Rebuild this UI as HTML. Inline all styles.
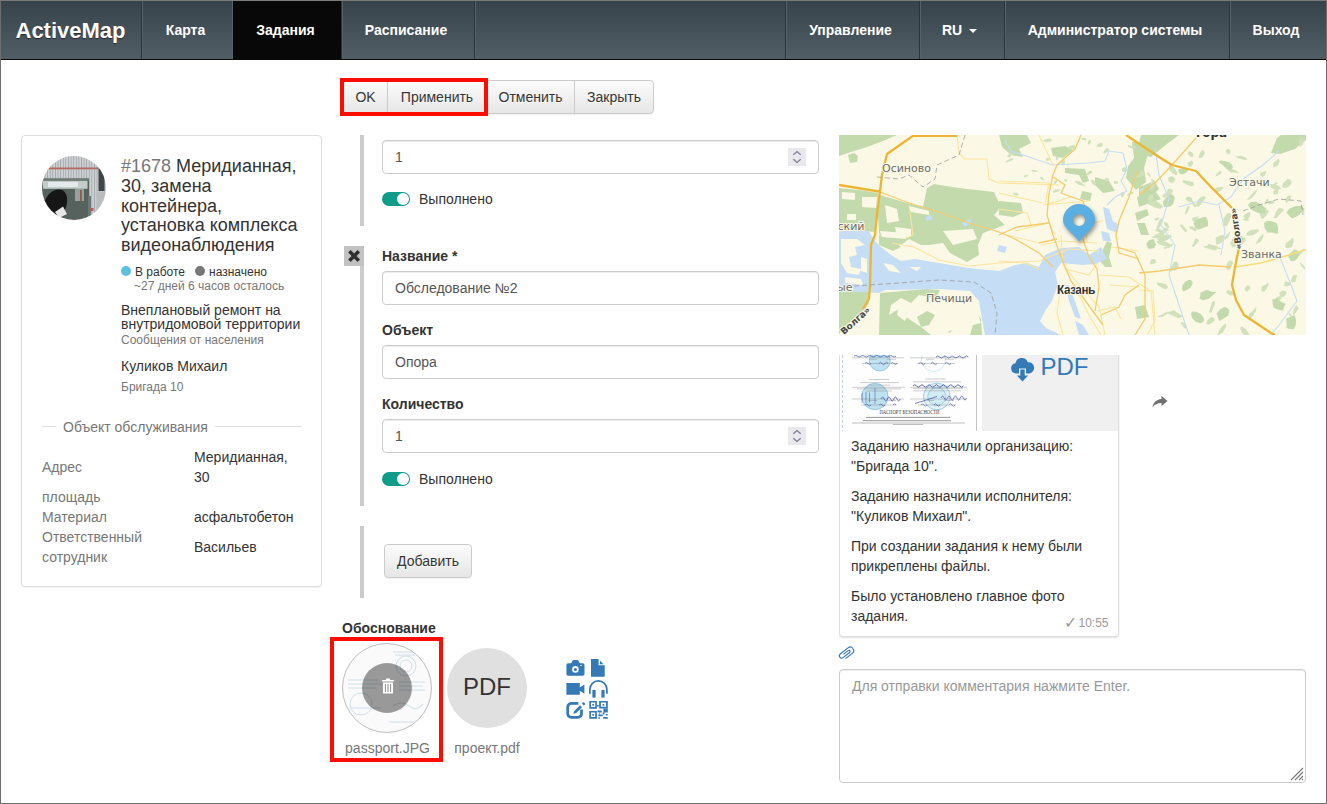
<!DOCTYPE html>
<html lang="ru">
<head>
<meta charset="utf-8">
<title>ActiveMap</title>
<style>
*{box-sizing:border-box;}
html,body{margin:0;padding:0;}
body{width:1327px;height:804px;overflow:hidden;background:#fff;font-family:"Liberation Sans",Arial,sans-serif;font-size:14px;line-height:20px;color:#333;position:relative;}
.abs{position:absolute;}
#frame{position:absolute;left:0;top:0;width:1327px;height:804px;border:1px solid #6e6e6e;border-top-color:#7c7a78;pointer-events:none;z-index:100;}
/* NAV */
#nav{position:absolute;left:1px;top:1px;width:1325px;height:59px;background:linear-gradient(#37434b,#525e66);border-bottom:1px solid #0a0a0a;}
#brand{position:absolute;left:14.5px;top:0;height:58px;line-height:59px;font-size:22px;font-weight:bold;color:#fff;text-shadow:0 1px 1px rgba(0,0,0,.5);}
.ni{position:absolute;top:0;height:58px;padding-right:4px;line-height:58px;text-align:center;color:#fff;font-weight:bold;font-size:14px;border-left:1px solid #2b343a;box-shadow:inset 1px 0 0 #566168;}
.ni.act{background:#080808;box-shadow:-1px 0 0 #566168;border-left-color:#080808;}
.caret{display:inline-block;width:0;height:0;border-left:4px solid transparent;border-right:4px solid transparent;border-top:4px solid #fff;vertical-align:middle;margin-left:3px;}
/* buttons */
.btn{position:absolute;height:34px;line-height:20px;padding:6px 0;text-align:center;font-size:14px;color:#333;border:1px solid #ccc;background:linear-gradient(#fcfcfc,#e6e6e6);text-shadow:0 1px 0 #fff;box-shadow:0 1px 1px rgba(0,0,0,.06);}
.red{position:absolute;border:4px solid #ff0c00;z-index:5;}
/* card */
#card{position:absolute;left:21px;top:135px;width:301px;height:452px;border:1px solid #ddd;border-radius:4px;box-shadow:0 1px 1px rgba(0,0,0,.05);background:#fff;}
.inp{position:absolute;left:382px;width:437px;height:34px;border:1px solid #ccc;border-radius:4px;box-shadow:inset 0 1px 1px rgba(0,0,0,.075);padding:6px 12px;font-size:14px;line-height:20px;color:#555;background:#fff;}
.lbl{position:absolute;left:382px;font-weight:bold;font-size:14px;line-height:20px;color:#333;}
.bar{position:absolute;left:360px;width:4px;background:#ccc;}
.tog{position:absolute;left:382px;width:28px;height:14px;border-radius:7px;background:#0f9d8a;}
.tog i{position:absolute;right:1px;top:1px;width:12px;height:12px;border-radius:6px;background:#fff;}
.togl{position:absolute;left:419px;font-size:14px;line-height:20px;color:#333;}
.spin{position:absolute;right:12px;top:7px;width:18px;height:18px;background:#e9e9ed;}

.dot{width:10px;height:10px;border-radius:5px;}
.s12{font-size:12px;line-height:16px;white-space:nowrap;}
.g14{font-size:14px;line-height:20px;color:#777;}
.v14{font-size:14px;line-height:20px;color:#333;}
</style>
</head>
<body>
<div id="nav">
  <div id="brand">ActiveMap</div>
  <div class="ni" style="left:140px;width:92px;">Карта</div>
  <div class="ni act" style="left:232px;width:108px;">Задания</div>
  <div class="ni" style="left:340px;width:134px;border-right:1px solid #2b343a;box-shadow:inset 1px 0 0 #566168, 1px 0 0 #566168;">Расписание</div>
  <div class="ni" style="left:784px;width:134px;">Управление</div>
  <div class="ni" style="left:918px;width:85px;padding-right:5px;">RU <span class="caret"></span></div>
  <div class="ni" style="left:1003px;width:225px;">Администратор системы</div>
  <div class="ni" style="left:1228px;width:97px;">Выход</div>
</div>

<!-- toolbar -->
<div class="btn" style="left:343px;top:80px;width:45px;border-radius:4px 0 0 4px;">OK</div>
<div class="btn" style="left:387px;top:80px;width:100px;">Применить</div>
<div class="btn" style="left:486px;top:80px;width:89px;">Отменить</div>
<div class="btn" style="left:574px;top:80px;width:80px;border-radius:0 4px 4px 0;">Закрыть</div>
<div class="red" style="left:340px;top:78px;width:148px;height:38px;"></div>


<div id="card">
  <svg class="abs" style="left:20px;top:20px;" width="64" height="64" viewBox="0 0 64 64">
    <defs><clipPath id="avc"><circle cx="32" cy="32" r="32"/></clipPath>
    <pattern id="stripes" width="2.600" height="64" patternUnits="userSpaceOnUse"><rect width="2.600" height="64" fill="#cfd2d4"/><rect x="0" width="0.900" height="64" fill="#a4a8ab"/></pattern><filter id="avb" x="-5%" y="-5%" width="110%" height="110%"><feGaussianBlur stdDeviation="0.45"/></filter></defs>
    <g clip-path="url(#avc)" filter="url(#avb)">
      <rect width="64" height="64" fill="url(#stripes)"/>
      <rect x="0" y="11.500" width="56" height="1.800" fill="#b56a5e"/>
      <rect x="56.500" y="7" width="6" height="28" fill="#3f4448"/>
      <rect x="55" y="36" width="9" height="28" fill="#b9bdc0"/>
      <rect x="0" y="22.500" width="47" height="42" fill="#55625d"/>
      <rect x="0" y="22.500" width="47" height="2" fill="#6f7b77"/>
      <rect x="1" y="24.800" width="44.500" height="8" fill="#c3ccc9"/>
      <rect x="6" y="26" width="30" height="5" fill="#e4eaea"/>
      <rect x="33" y="33" width="9" height="12" fill="#98a09c"/>
      <rect x="38" y="34" width="1.800" height="11" fill="#8a5a4c"/>
      <rect x="46" y="40" width="3" height="24" fill="#6d7774"/>
      <rect x="48.500" y="52" width="3" height="3" fill="#b3614f"/>
      <path d="M2 50C3 38 13 32.500 19 33.800C26 35.500 26 46 24 51L21 58 14 64H0Z" fill="#121212"/>
      <path d="M13 56L21 50.500 25 58 17 62Z" fill="#e6e6e6"/>
    </g>
  </svg>
  <div class="abs" style="left:99px;top:21px;width:181px;font-size:18px;line-height:19.8px;color:#333;"><span style="color:#777">#1678</span> Меридианная, 30, замена контейнера, установка комплекса видеонаблюдения</div>
  <div class="abs dot" style="left:99px;top:130px;background:#5bc0de;"></div>
  <div class="abs s12" style="left:113px;top:128px;color:#333;">В работе</div>
  <div class="abs dot" style="left:173px;top:130px;background:#777;"></div>
  <div class="abs s12" style="left:187px;top:128px;color:#333;">назначено</div>
  <div class="abs s12" style="left:112px;top:142px;color:#777;">~27 дней 6 часов осталось</div>
  <div class="abs" style="left:99px;top:167px;width:200px;font-size:14px;line-height:14.4px;color:#333;">Внеплановый ремонт на внутридомовой территории</div>
  <div class="abs s12" style="left:99px;top:196px;color:#777;">Сообщения от населения</div>
  <div class="abs" style="left:99px;top:220px;font-size:14px;line-height:20px;color:#333;">Куликов Михаил</div>
  <div class="abs s12" style="left:99px;top:243px;color:#777;">Бригада 10</div>
  <div class="abs" style="left:20px;top:290px;width:14px;height:1px;background:#e0e0e0;"></div>
  <div class="abs" style="left:193px;top:290px;width:87px;height:1px;background:#e0e0e0;"></div>
  <div class="abs" style="left:41px;top:281px;font-size:14px;line-height:20px;color:#777;">Объект обслуживания</div>
  <div class="abs g14" style="left:20px;top:321px;">Адрес</div>
  <div class="abs v14" style="left:172px;top:311px;width:110px;">Меридианная, 30</div>
  <div class="abs g14" style="left:20px;top:351px;">площадь</div>
  <div class="abs g14" style="left:20px;top:371px;">Материал</div>
  <div class="abs v14" style="left:172px;top:371px;">асфальтобетон</div>
  <div class="abs g14" style="left:20px;top:391px;width:130px;">Ответственный сотрудник</div>
  <div class="abs v14" style="left:172px;top:401px;">Васильев</div>
</div>



<!-- middle form -->
<div class="bar" style="top:135px;height:91px;"></div>
<div class="inp" style="top:140px;">1<span class="spin"><svg width="18" height="18" viewBox="0 0 18 18"><path d="M5.300 6.800 L9 3.500 L12.700 6.800 M5.300 11.200 L9 14.500 L12.700 11.200" fill="none" stroke="#7f7f92" stroke-width="1.300"/></svg></span></div>
<div class="tog" style="top:192px;"><i></i></div>
<div class="togl" style="top:189px;">Выполнено</div>

<div class="bar" style="top:246px;height:260px;"></div>
<div class="abs" style="left:344px;top:246px;width:20px;height:20px;background:#c2c2c2;"><svg width="20" height="20" viewBox="0 0 20 20"><path d="M5.400 5.300 L14.800 14.700 M14.800 5.300 L5.400 14.700" stroke="#303030" stroke-width="3.600" fill="none"/></svg></div>
<div class="lbl" style="top:246px;">Название *</div>
<div class="inp" style="top:271px;">Обследование №2</div>
<div class="lbl" style="top:320px;">Объект</div>
<div class="inp" style="top:345px;">Опора</div>
<div class="lbl" style="top:394px;">Количество</div>
<div class="inp" style="top:419px;">1<span class="spin"><svg width="18" height="18" viewBox="0 0 18 18"><path d="M5.300 6.800 L9 3.500 L12.700 6.800 M5.300 11.200 L9 14.500 L12.700 11.200" fill="none" stroke="#7f7f92" stroke-width="1.300"/></svg></span></div>
<div class="tog" style="top:472px;"><i></i></div>
<div class="togl" style="top:468.500px;">Выполнено</div>

<div class="bar" style="top:526px;height:72px;"></div>
<div class="btn" style="left:384px;top:544px;width:88px;border-radius:4px;">Добавить</div>

<div class="lbl" style="left:342px;top:618px;">Обоснование</div>
<!-- attachments -->
<div class="abs" style="left:342px;top:643px;width:90px;height:90px;border-radius:45px;border:1px solid #bdbdbd;background:#fafafa;overflow:hidden;">
  <svg width="88" height="88" viewBox="0 0 88 88" style="position:absolute;left:0;top:0;opacity:.45">
    <g fill="none" stroke="#9bbfd0" stroke-width="1">
      <circle cx="63" cy="22" r="10"/><circle cx="18" cy="60" r="11"/><circle cx="63" cy="22" r="6"/>
      <path d="M50 8 h24 M52 11 h20 M5 36 h30 M5 40 h34 M5 44 h28 M56 38 h26 M56 42 h24 M56 46 h26 M8 64 h30 M50 62 q8 -6 16 0 t14 -2 M46 78 h24"/>
    </g>
  </svg>
</div>
<div class="abs" style="left:362px;top:663px;width:50px;height:50px;border-radius:25px;background:rgba(0,0,0,.39);"></div>
<svg class="abs" style="left:381px;top:678px;" width="14" height="16" viewBox="0 0 14 16"><path d="M5 0.5h4v1.5h4v1.6H1V2h4z M2 4.6h10V15.5H2z" fill="#fff"/><path d="M4.4 6v8 M7 6v8 M9.6 6v8" stroke="#8a8a8a" stroke-width="1"/></svg>
<div class="abs" style="left:334px;top:738px;width:107px;text-align:center;font-size:14px;line-height:20px;color:#777;">passport.JPG</div>
<div class="abs" style="left:447px;top:648px;width:80px;height:80px;border-radius:40px;background:#e0e0e0;text-align:center;font-size:24px;line-height:78.500px;color:#333;">PDF</div>
<div class="abs" style="left:447px;top:738px;width:80px;text-align:center;font-size:14px;line-height:20px;color:#777;">проект.pdf</div>
<div class="red" style="left:330px;top:637px;width:113px;height:125px;"></div>

<!--MAP-->
<svg class="abs" style="left:839px;top:135px;" width="467" height="200" viewBox="0 0 467 200" font-family="'DejaVu Sans','Liberation Sans',sans-serif">
<defs>
<filter id="soft" x="-5%" y="-5%" width="110%" height="110%"><feGaussianBlur stdDeviation="0.7"/></filter>
<filter id="pinsh" x="-40%" y="-40%" width="180%" height="180%"><feGaussianBlur stdDeviation="2"/></filter>
</defs>
<rect width="467" height="200" fill="#fbf9e6"/>
<g filter="url(#soft)">
<g fill="#c3daad">
<path d="M0 0H58L44 6 28 12 12 17 0 21Z"/>
<path d="M9 20l6-2 4 3-1 6-7 1z"/>
<path d="M0 53L20 55 39 58 37 97 0 95Z"/>
<path d="M88 53L95 49 120 53 155 57 162 72 155 80 166 90 144 98 139 110 140 120 128 127 111 118 104 108 90 110 82 110 70 104 62 110 52 110 40 99 39 80 41 60 68 68 84 72Z"/>
<path d="M40 100l12 4 10 8-8 4-14-6z"/>
<path d="M0 156H31L30 168 24 176 12 186 0 199Z"/>
<path d="M41 158L87 154 101 155 97 163 80 160 72 168 62 163 52 170 50 180 58 175 70 184 82 192 92 200H40Z"/>
<path d="M78 182l10-6 8 4-6 10-8 2z"/>
<path d="M136 176l6 8 1 16h-12l4-14z"/>
<path d="M104 186l12-4 4 8-10 8z"/>
<path d="M160 0H188L192 8 180 14 184 22 172 20 163 12Z"/>
<path d="M160 66l22 2 2 10-10 4-14-2z"/>
<path d="M212 13l14-2 8 4-10 8-10-2z"/>
<path d="M226 33l20 1 4 12-6 2-4-8-14-2z"/>
<path d="M243 56l10 2-2 8-10-2z M256 42l14 4 6 10-12 2-8-8z"/>
<path d="M293 7l10 0 6 12-4 14 2 14-10 8-10-12 2-12 6-8z"/>
<path d="M298 62l18-6 6 8-22 8z M296 78l12-4 2 6-12 6z M298 88l8 0 4 12-8 0z"/>
<path d="M256 122l6-4 6-12 5 2-3 14 3 10-7 0-5-6z"/>
<path d="M296 172l10-2 4 12-12 2z M160 186l6 0 2 8-8 2z"/>
<path d="M302 0H340L324 12 312 22 304 20 300 8Z"/>
<path d="M432 18L438 3 442 0H467V5L456 14 441 19Z"/>
<path d="M300 52l16-6 4 8-8 8-12 2z"/>
</g>
<g fill="#d0e1bb">
<path d="M382.8 114.2 377.3 113.8 372.1 113.6 368.8 110.8 368.7 108.8 374.0 109.9 378.9 111.4Z"/>
<path d="M332.0 110.2 327.9 111.8 321.0 109.7 316.9 106.8 319.6 105.6 323.0 105.9 327.9 106.9Z"/>
<path d="M311.7 41.7 310.5 41.8 308.7 39.4 307.9 37.6 308.5 36.9 310.1 38.4 311.3 40.0Z"/>
<path d="M411.2 76.8 411.2 80.6 409.5 83.7 407.0 85.5 405.7 83.7 404.3 80.9 407.7 78.1Z"/>
<path d="M442.5 73.3 445.3 74.6 440.7 79.6 437.7 83.0 434.6 83.0 436.7 77.5 440.1 72.7Z"/>
<path d="M335.7 129.6 335.8 132.7 333.5 135.5 331.7 137.0 331.0 136.1 331.5 134.1 332.9 130.7Z"/>
<path d="M334.4 109.5 332.2 111.7 329.0 113.3 326.1 113.7 323.7 112.9 328.4 111.0 332.0 108.7Z"/>
<path d="M465.3 113.6 465.6 115.0 460.6 120.4 458.1 121.5 454.2 123.9 459.3 118.4 462.7 115.1Z"/>
<path d="M429.1 64.0 429.9 64.9 427.9 67.3 426.3 69.4 424.9 69.3 426.4 66.5 427.9 63.7Z"/>
<path d="M439.4 23.4 440.8 26.4 438.8 30.0 437.0 31.6 434.5 32.4 433.9 28.6 436.7 26.2Z"/>
<path d="M458.7 171.9 459.9 173.0 457.6 176.6 454.6 180.2 453.8 178.1 454.6 174.8 457.3 170.1Z"/>
<path d="M384.7 100.2 385.9 102.6 382.5 108.0 377.5 109.7 376.7 106.7 376.7 102.5 381.9 100.3Z"/>
<path d="M305.3 52.1 305.5 53.4 303.0 57.0 301.1 57.0 300.4 56.5 301.2 54.6 303.8 52.4Z"/>
<path d="M424.5 98.7 424.3 102.0 421.9 106.4 419.4 107.9 416.4 109.2 419.1 104.3 421.4 101.3Z"/>
<path d="M352.5 25.6 354.2 27.4 353.3 30.4 351.2 31.9 349.1 31.3 348.5 28.6 350.5 26.8Z"/>
<path d="M417.5 171.6 416.8 175.9 414.0 181.1 410.9 183.4 408.9 183.2 410.4 178.7 413.6 175.8Z"/>
<path d="M410.9 203.5 406.5 201.8 402.7 197.2 401.1 193.0 402.7 191.2 406.7 193.9 409.7 198.6Z"/>
<path d="M352.6 17.0 354.4 19.1 354.2 22.0 351.1 21.4 349.7 20.0 348.8 18.2 349.8 16.1Z"/>
<path d="M337.5 40.4 334.2 38.8 330.8 35.6 329.8 32.1 330.3 29.4 334.7 31.9 338.4 37.6Z"/>
<path d="M334.8 42.2 336.3 44.1 335.1 47.3 331.5 48.0 329.4 45.5 329.4 41.9 332.9 41.3Z"/>
<path d="M330.0 93.0 328.4 93.0 325.9 90.7 324.8 87.7 325.9 86.4 328.7 88.5 330.0 91.2Z"/>
<path d="M438.7 51.4 439.3 54.5 439.1 59.0 436.3 59.5 434.8 59.3 434.1 56.7 436.3 54.2Z"/>
<path d="M438.9 47.7 438.4 48.6 436.7 50.0 434.2 50.3 434.4 49.1 436.1 47.9 438.0 47.2Z"/>
<path d="M442.3 54.2 438.0 54.5 434.3 53.9 431.3 51.8 430.6 49.1 435.5 49.2 440.3 51.1Z"/>
<path d="M427.8 74.4 430.1 76.6 426.4 81.6 423.0 84.2 421.7 82.1 420.6 78.5 424.8 76.4Z"/>
<path d="M392.4 125.6 394.3 127.7 392.4 131.4 390.3 135.2 387.4 134.4 387.5 129.9 389.6 125.7Z"/>
<path d="M344.3 181.2 339.8 183.3 333.3 180.4 327.7 177.8 331.8 176.5 334.6 175.0 338.2 177.7Z"/>
<path d="M359.7 81.3 358.6 84.6 358.4 87.9 355.4 87.1 353.6 85.9 353.1 82.8 356.4 82.2Z"/>
<path d="M329.6 101.1 330.0 104.1 324.4 106.5 319.6 106.9 318.2 104.3 322.4 101.3 327.1 99.6Z"/>
<path d="M332.6 100.5 332.6 102.3 326.2 105.6 323.2 105.1 319.8 104.9 324.4 101.5 330.4 99.9Z"/>
<path d="M391.3 96.2 390.8 98.6 388.9 102.7 386.2 105.1 385.4 104.3 386.5 101.0 389.0 98.5Z"/>
<path d="M390.9 78.0 392.6 80.0 390.8 85.3 387.6 91.3 384.2 90.2 384.5 83.5 388.2 78.2Z"/>
<path d="M320.9 83.0 319.2 84.6 318.0 85.6 316.4 85.5 315.1 84.5 316.9 83.1 318.8 82.6Z"/>
<path d="M408.3 24.4 405.9 25.1 400.3 23.7 395.5 21.3 399.3 21.2 401.4 20.6 407.0 22.5Z"/>
<path d="M406.2 102.8 406.8 105.4 402.3 110.3 397.4 113.7 397.9 110.2 398.5 106.9 403.5 102.4Z"/>
<path d="M452.3 60.5 451.5 63.8 450.0 65.7 447.0 68.4 446.5 65.0 447.1 62.9 448.9 60.8Z"/>
<path d="M374.9 183.2 375.9 185.6 372.4 188.0 370.0 189.5 367.3 189.2 368.3 185.2 372.7 181.5Z"/>
<path d="M325.9 98.2 324.1 101.3 318.7 103.6 316.2 102.9 312.7 102.6 316.8 99.5 322.6 97.1Z"/>
<path d="M382.3 36.1 382.3 38.5 379.8 40.2 378.5 40.7 376.2 41.2 377.9 38.6 379.9 36.5Z"/>
<path d="M358.1 94.8 356.6 96.2 352.9 94.5 350.6 93.2 350.3 91.5 353.5 91.5 356.9 92.9Z"/>
<path d="M453.5 117.0 455.4 119.4 454.8 122.4 452.3 124.3 449.8 122.8 449.6 120.2 450.6 117.9Z"/>
<path d="M387.2 188.4 387.1 191.6 384.0 197.2 381.0 199.3 378.5 200.2 380.4 194.9 384.3 190.1Z"/>
<path d="M429.5 147.5 429.3 151.0 427.7 153.5 425.1 157.1 422.3 155.7 423.0 151.2 426.4 149.8Z"/>
<path d="M347.6 193.6 345.5 193.2 343.4 190.7 341.2 187.3 343.3 186.9 345.9 188.5 348.1 191.8Z"/>
<path d="M463.5 1.8 464.9 4.2 464.1 8.9 461.0 11.9 460.0 8.9 459.4 6.6 461.1 3.3Z"/>
<path d="M358.9 103.9 359.9 106.3 357.1 109.3 354.8 112.1 352.7 111.3 354.7 107.7 356.2 103.6Z"/>
<path d="M329.7 95.5 327.7 96.6 325.1 96.3 323.8 94.5 324.1 92.8 326.3 92.5 328.9 93.4Z"/>
<path d="M384.9 52.7 382.6 55.0 379.4 57.1 376.5 57.0 375.4 55.8 376.9 52.8 382.5 51.7Z"/>
<path d="M448.7 147.0 452.0 147.8 450.6 150.3 448.5 151.4 445.1 151.1 445.6 148.2 446.4 146.1Z"/>
<path d="M458.1 140.1 457.3 143.4 456.3 146.8 452.8 147.4 451.7 145.2 452.8 142.8 454.9 139.8Z"/>
<path d="M322.7 83.1 323.7 85.8 321.8 90.5 319.4 94.7 317.2 94.2 318.8 89.1 320.3 85.6Z"/>
<path d="M326.3 97.8 323.4 98.3 320.0 97.4 316.3 95.7 317.2 94.2 320.7 94.1 324.9 95.8Z"/>
<path d="M427.6 35.8 426.4 39.3 425.4 41.0 423.2 41.9 421.2 40.5 421.3 37.5 424.2 36.9Z"/>
<path d="M391.5 16.9 390.9 19.6 388.0 18.4 386.9 16.5 387.5 14.6 389.5 13.7 391.0 15.2Z"/>
<path d="M446.5 156.1 447.7 158.7 444.7 161.7 442.1 162.0 440.8 160.7 440.1 157.7 443.9 155.4Z"/>
<path d="M353.1 148.6 350.7 150.5 347.1 153.3 344.8 152.6 344.4 151.8 346.0 149.8 351.1 148.2Z"/>
<path d="M418.6 54.9 416.7 58.5 413.1 62.7 409.8 64.8 408.0 64.8 411.5 60.6 415.5 56.1Z"/>
<path d="M337.8 126.5 339.4 129.3 339.3 133.3 336.0 136.0 332.7 134.6 333.2 130.6 334.5 126.9Z"/>
<path d="M353.6 65.3 351.9 67.0 348.7 66.6 346.6 64.4 347.3 62.0 350.3 61.4 352.8 63.1Z"/>
<path d="M396.5 159.3 394.6 160.3 391.2 160.5 387.1 158.1 388.2 155.1 392.9 155.9 395.4 157.4Z"/>
<path d="M327.2 61.3 325.4 62.8 323.0 61.6 324.6 59.3 325.9 58.3 328.4 57.4 329.8 59.8Z"/>
<path d="M316.7 125.1 317.0 127.7 314.3 129.0 311.1 129.2 311.3 126.3 312.4 124.2 314.8 123.9Z"/>
<path d="M435.1 66.5 435.9 68.1 433.3 68.7 430.5 69.6 429.1 67.6 431.9 65.8 433.9 65.9Z"/>
<path d="M364.9 15.6 365.9 17.8 364.0 22.1 361.1 23.3 359.5 22.3 360.6 19.2 362.4 15.5Z"/>
<path d="M465.6 78.2 463.7 77.5 461.3 76.1 461.2 73.8 462.0 72.4 464.2 74.3 465.1 76.2Z"/>
<path d="M456.6 186.9 452.7 183.0 450.5 180.6 449.0 177.9 449.5 177.3 451.9 179.4 455.3 183.5Z"/>
<path d="M331.8 53.7 334.2 55.6 332.8 58.8 330.6 61.2 328.4 59.4 328.0 56.8 328.8 53.4Z"/>
<path d="M410.1 154.7 408.0 157.1 405.7 154.8 406.6 152.1 408.3 150.3 410.8 150.9 411.3 153.3Z"/>
<path d="M466.3 134.6 464.0 133.1 462.3 131.0 461.1 128.8 461.3 127.2 463.8 129.6 466.0 132.3Z"/>
<path d="M331.8 176.7 327.1 179.6 323.2 181.9 320.4 182.0 317.4 181.9 322.8 179.5 327.8 176.8Z"/>
<path d="M442.3 162.0 442.5 163.9 439.7 165.2 438.2 164.3 436.4 163.5 438.3 161.8 440.7 161.2Z"/>
<path d="M304.7 40.8 302.9 41.8 300.7 39.8 301.1 37.6 301.9 34.9 304.4 37.0 305.6 39.1Z"/>
<path d="M313.6 59.1 314.7 60.5 314.8 64.1 312.0 66.8 309.5 66.0 309.2 61.9 311.9 59.5Z"/>
<path d="M375.6 165.7 376.2 168.7 374.4 172.5 372.1 178.4 370.1 176.8 371.6 171.6 373.2 167.0Z"/>
<path d="M350.1 70.2 350.4 73.2 348.7 76.8 347.3 79.0 345.8 79.2 346.5 76.0 347.7 72.8Z"/>
<path d="M347.4 96.9 345.8 96.7 343.6 94.3 340.9 90.4 342.5 89.0 345.8 92.4 348.3 95.6Z"/>
<path d="M317.3 49.5 315.2 48.4 312.9 46.8 311.8 43.9 313.9 44.5 315.4 45.3 316.4 47.0Z"/>
<path d="M419.7 94.2 419.4 96.8 413.5 100.5 407.8 100.7 407.4 98.1 411.6 94.9 416.0 94.5Z"/>
<path d="M357.2 72.3 355.7 72.0 353.1 69.0 352.2 66.7 351.6 64.1 354.9 67.6 357.7 71.1Z"/>
<path d="M355.1 49.7 352.9 51.5 347.5 49.6 343.6 47.3 343.9 44.9 348.9 46.0 354.2 46.9Z"/>
<path d="M315.0 46.7 317.7 47.1 315.3 51.5 312.9 56.1 311.1 53.7 310.5 50.1 313.1 47.0Z"/>
<path d="M396.5 106.4 398.0 109.6 396.1 112.2 393.1 112.0 392.1 109.7 390.7 107.0 393.5 106.6Z"/>
<path d="M451.8 45.3 452.8 48.3 449.2 51.9 445.9 53.0 443.0 52.2 444.3 47.7 448.8 43.8Z"/>
<path d="M329.3 152.2 326.6 154.4 321.5 151.7 318.4 149.9 317.9 147.3 322.5 147.9 326.9 149.2Z"/>
<path d="M400.2 38.0 395.6 37.4 392.1 37.6 388.8 35.4 389.1 33.6 393.5 34.3 397.2 35.6Z"/>
<path d="M324.4 72.0 320.8 73.9 314.7 72.1 308.5 69.0 310.3 65.9 316.3 65.5 321.2 68.7Z"/>
<path d="M378.0 114.9 374.8 115.6 370.3 114.0 363.7 111.8 367.1 110.7 370.8 110.2 375.8 112.5Z"/>
<path d="M364.7 61.0 367.2 62.6 363.5 67.2 359.7 72.0 356.6 70.5 359.0 64.7 362.2 62.1Z"/>
<path d="M454.3 102.4 454.7 107.0 452.6 112.2 448.8 113.2 446.2 112.4 446.8 108.2 450.0 105.8Z"/>
<path d="M410.8 85.7 408.2 85.7 406.1 85.7 403.4 84.3 405.7 83.8 407.0 83.5 409.0 84.3Z"/>
<path d="M212.8 4.5 212.3 6.6 208.6 7.1 206.5 6.9 203.1 5.9 207.5 4.1 211.2 3.2Z"/>
<path d="M295.0 56.4 294.2 58.4 291.1 59.8 288.1 61.3 288.5 59.6 289.8 58.0 292.1 57.2Z"/>
<path d="M286.1 57.3 285.2 59.7 284.4 60.9 282.6 62.4 281.9 60.7 281.4 58.5 283.8 56.8Z"/>
<path d="M264.0 9.4 263.4 11.0 260.8 11.9 257.2 11.6 258.4 9.4 260.4 8.2 263.1 8.1Z"/>
<path d="M256.5 50.7 254.5 49.8 253.0 48.2 251.7 45.3 253.8 44.6 255.8 46.5 257.3 48.7Z"/>
<path d="M179.3 59.2 179.3 60.7 176.4 60.4 174.7 59.4 173.5 57.8 176.7 57.8 178.9 58.0Z"/>
<path d="M269.6 13.5 270.1 15.8 267.6 17.3 265.9 18.6 264.2 17.8 265.5 15.6 267.3 13.2Z"/>
<path d="M236.3 11.0 235.8 13.2 232.4 14.5 229.7 14.4 228.2 12.9 230.8 10.7 234.1 10.1Z"/>
<path d="M296.7 13.0 295.7 13.7 291.9 13.2 288.7 11.4 289.0 10.1 293.0 11.0 296.3 11.9Z"/>
<path d="M198.8 36.7 196.9 37.1 193.6 36.7 192.5 35.4 192.7 34.8 194.6 34.9 197.2 35.4Z"/>
<path d="M225.3 24.3 226.1 26.8 225.4 29.2 223.4 30.9 222.1 29.1 222.1 27.3 223.0 25.6Z"/>
<path d="M174.1 17.9 172.6 20.1 171.1 22.6 168.9 22.2 168.1 21.3 169.5 19.6 172.1 17.3Z"/>
<path d="M278.8 47.0 279.5 48.6 277.2 48.7 275.6 49.0 274.7 47.7 275.8 45.8 277.8 46.4Z"/>
<path d="M227.3 46.5 226.3 46.7 225.3 45.5 225.1 44.0 226.1 43.9 227.0 44.5 228.7 46.0Z"/>
<path d="M270.2 44.9 269.5 45.8 267.0 46.3 265.8 44.8 266.0 43.8 267.5 42.6 270.0 43.7Z"/>
<path d="M174.5 23.6 173.7 25.1 169.9 26.8 166.3 27.8 167.0 26.3 169.2 24.8 172.8 23.1Z"/>
<path d="M218.3 45.3 217.9 47.0 217.0 48.4 215.6 49.0 214.4 48.6 215.2 46.8 216.7 45.4Z"/>
<path d="M302.0 40.5 302.6 41.5 298.6 42.7 296.0 42.9 296.6 41.8 298.1 40.7 301.1 39.9Z"/>
<path d="M220.9 54.5 221.8 55.7 217.7 57.0 214.1 57.9 213.7 56.5 216.3 54.3 219.3 54.4Z"/>
<path d="M210.9 23.1 210.6 25.3 208.8 25.7 207.2 25.9 206.7 24.3 207.6 23.1 208.8 22.7Z"/>
<path d="M247.4 4.1 247.3 5.6 244.7 5.1 242.2 4.3 242.5 2.7 245.0 2.7 246.9 3.0Z"/>
<path d="M204.3 45.4 203.0 45.3 201.4 43.6 201.1 41.8 202.1 41.6 203.4 42.4 205.2 44.4Z"/>
<path d="M247.3 51.7 243.2 50.7 239.6 49.8 236.6 47.4 236.3 45.5 240.9 46.6 244.0 49.1Z"/>
<path d="M251.6 4.5 252.1 6.1 251.5 8.5 249.9 9.7 249.0 9.0 248.8 7.2 250.1 4.9Z"/>
<path d="M189.8 39.6 188.9 40.7 187.4 41.9 185.1 42.2 185.0 41.1 186.3 39.7 188.2 39.7Z"/>
<path d="M218.7 21.1 219.6 22.3 219.0 24.2 217.7 24.9 216.7 24.4 216.8 23.0 217.3 21.6Z"/>
<path d="M287.2 32.8 287.9 34.6 286.7 37.3 284.4 37.0 282.9 36.1 282.9 33.6 285.4 32.0Z"/>
<path d="M253.1 35.8 252.8 37.9 249.9 39.6 247.0 40.9 247.9 38.6 248.6 37.4 250.7 35.8Z"/>
</g>
<g fill="#c3daad">
<path d="M367.0 81.8 368.7 85.2 369.2 91.1 363.0 93.3 359.0 94.4 356.3 92.5 354.4 88.3 358.9 83.9 362.9 82.5Z"/>
<path d="M426.1 77.4 422.2 78.7 417.2 77.3 412.0 74.6 409.0 70.2 411.2 67.3 416.0 66.6 421.9 69.3 427.1 73.6Z"/>
<path d="M465.8 74.0 462.1 78.1 458.5 80.9 452.9 83.6 450.1 80.4 447.3 77.7 450.3 73.7 455.9 71.3 462.3 70.8Z"/>
<path d="M438.7 98.9 433.2 97.6 428.5 97.5 425.5 92.7 425.0 87.9 428.5 85.7 432.8 86.3 438.0 88.4 439.2 93.7Z"/>
<path d="M352.7 145.2 353.6 148.2 352.0 152.2 348.3 154.7 344.0 156.6 343.0 153.3 343.7 149.9 346.1 146.7 349.5 144.9Z"/>
<path d="M377.7 157.0 373.6 160.3 370.6 163.2 364.2 165.4 360.4 163.8 361.2 161.0 361.5 157.6 368.4 154.8 372.3 156.7Z"/>
<path d="M388.2 172.7 390.4 175.2 389.6 180.3 384.8 183.4 380.2 185.9 378.9 182.1 377.4 178.5 381.3 174.3 385.2 171.9Z"/>
<path d="M364.7 186.6 361.6 188.2 356.5 186.7 353.0 182.9 352.1 179.5 352.8 176.6 357.0 176.8 361.9 178.9 364.9 183.1Z"/>
<path d="M315.8 107.4 316.9 109.6 315.4 112.9 311.6 113.8 308.9 113.5 308.2 111.5 307.3 108.8 310.3 105.1 315.0 104.0Z"/>
<path d="M445.0 172.1 444.1 175.6 439.2 174.8 434.7 172.8 433.7 169.1 433.2 164.8 438.0 163.1 442.2 167.0 447.0 169.0Z"/>
<path d="M459.8 120.8 458.1 123.8 455.5 126.0 451.8 126.2 449.4 121.8 452.8 117.5 454.9 114.2 457.6 115.3 460.8 116.3Z"/>
<path d="M334.7 67.5 332.2 71.0 328.9 72.1 325.1 72.0 323.7 67.1 326.7 62.8 329.4 59.9 333.1 59.2 335.8 62.3Z"/>
<path d="M404.4 104.0 401.6 106.4 399.0 108.4 395.4 107.6 392.5 105.6 394.3 102.9 396.0 101.2 398.7 101.0 402.8 100.8Z"/>
<path d="M456.9 189.5 454.9 194.2 451.0 194.0 447.6 193.1 447.6 188.7 447.2 183.6 451.4 182.1 455.6 180.2 457.1 184.9Z"/>
<path d="M348.4 33.6 349.1 35.8 346.4 38.3 343.0 39.5 340.8 38.7 339.9 37.2 339.0 34.5 343.3 32.9 346.2 32.9Z"/>
<path d="M393.7 33.1 392.4 34.6 387.7 34.2 384.1 30.3 379.3 26.7 382.0 25.5 385.9 26.0 391.1 27.7 393.9 31.2Z"/>
</g>
<g fill="#c5ddf5">
<path d="M0 96H30L32 100 36 106 42 112 52 120 62 126 76 124 100 128 130 133 160 136 176 130 188 128 200 132 206 120 222 113 240 112 250 120 262 112 268 124 256 129 244 130 222 128 216 137 219 150 213 166 206 176 201 186 207 193 222 200H146L143 184 140 166 131 156 100 154 46 155 40 158 0 156Z"/>
<path d="M226 150l4 0 8 22 4 12-6-2-6-16z M236 186l8 4 6 10h-10z"/>
<path d="M264 72l6 2 4 12 6 4-2 8-10-4-2-10z M262 96l8 2 2 8-8 0z"/>
<path d="M86 82l6-2 2 4-6 2z M123 88l8-4 2 4-8 4z M160 110l8 2-2 6-8-2z"/>
</g>
<g fill="#fbf9e6">
<path d="M2 104l16 0 8 6-10 2 2 8-8 2 2 10 10 2-2 6-12-2-6-10z M44 128l10 2 8 8-12-2z M70 132l12 0-4 4z M22 122l6 2 0 14-6-2z M6 142l16 2 2 6-18-2z"/>
<path d="M3 57l13 1 0 7-13-1z M23 62l15 0-1 11-14-1z M8 79l9 0 0 6-9 0z M70 71l20 5 0 4-18-3z M41 96l26 2 0 6-24-2z M46 70l12 4 2 12-12 2z M104 96l30-2 4 10-24 6z M56 92l16 2 0 8-14 0z M96 174l38-8 8 22-40 10z M60 172l10 6-4 8-8-6z"/>
</g>
</g>
<g fill="none" stroke="#c5ddf5" stroke-width="1.1">
<path d="M165 4 172 16 196 24 214 30 250 28 266 26 270 16 284 18 288 34 282 46 288 56 276 62 268 70"/>
<path d="M316 12 320 40 330 64 322 90 336 110 330 140 340 170 350 200"/>
<path d="M440 16 424 30 404 44 392 62 378 70 360 66 340 72"/>
<path d="M380 70 386 96 382 120 M440 120 452 150 458 166 440 190 432 200"/>
</g>
<g fill="none" stroke="#fbe59c" stroke-width="1.1">
<path d="M118 0 120 18 126 24 148 24 150 44 160 48 220 50 M160 58 204 68 M53 108 75 112 100 125 130 131 160 128 200 126 230 114 260 116"/>
<path d="M160 46 210 48 M160 74 188 78 192 90 M176 96 210 88 216 100 M200 0 214 30 M210 48 206 70 232 62 M204 70 250 66"/>
<path d="M160 126 186 128 200 134 M168 100 200 108 M203 110 222 106 258 108 M222 100 224 130 240 150 260 172 266 200 M226 134 250 140 258 128 M222 150 218 178 224 200"/>
<path d="M240 160 250 180 262 200 M260 140 290 142 312 156 316 200 M272 112 300 116 M270 150 300 152 M258 176 276 172 282 184 M248 108 246 90 264 86"/>
<path d="M70 70 74 100 66 104 M300 155 314 156 316 186 308 200"/>
<path d="M396 132 422 128 450 120 467 114.500" stroke="#f9dc78" stroke-width="1.6"/>
</g>
<g fill="none" stroke="#f6cb6c" stroke-width="1.3">
<path d="M41 57 70 68 100 77 130 88 160 97 176 104 200 118 214 132"/>
<path d="M242 0 236 14 218 30 214 40 210 58 208 80 214 100 222 122 232 146 248 168 264 190"/>
<path d="M160 100 178 92 210 88 M200 108 218 104 M244 104 250 122 258 134 260 152 256 176"/>
<path d="M357 3 333 30 318 46 300 60 M298 37 290 62 280 86 277 100 280 118 300 124 M300 138 321 136 360 130 392 132"/>
<path d="M278 112 296 118 306 140 306 184 296 200 M262 180 280 172 286 160 300 150"/>
<path d="M214 42 226 50 222 58 244 66 246 72"/>
</g>
<g fill="none" stroke="#edb533" stroke-width="2.3" stroke-linejoin="round">
<path d="M118 0.800H74L48 19 43 40 41 56 38 80 36 100 32 110 31 150 30 164 24 174"/>
<path d="M0 50 40 56.500"/>
<path d="M287 0 320 22 333 30 357 36 372 52 393 73 M400 113 396 132 393 150 397 165 405 180 420 190 432 198 436 200"/>
</g>
<g fill="none" stroke="#9a9a9a" stroke-width="0.8" stroke-dasharray="5 3">
<path d="M15 151 60 148 100 145 135 147 152 158 158 178 156 200"/>
<path d="M38 42 60 44 70 40 84 52 96 44 98 30 120 20 126 0"/>
<path d="M404 76 420 70 440 64 462 66 464 80"/>
</g>
<g font-size="11" fill="#6b6b6b" stroke="#fbf9e6" stroke-width="2" paint-order="stroke" stroke-linejoin="round">
<text x="43" y="37">Осиново</text>
<text x="-8" y="95">ьский</text>
<text x="-2" y="155.500">ые</text>
<text x="87" y="167">Печищи</text>
<text x="390" y="51">Эстачи</text>
<text x="402" y="123">Званка</text>
<text x="357" y="2" fill="#333" font-weight="bold" font-size="12">гора</text>
<text x="218" y="159" font-size="12" font-weight="bold" fill="#333" font-family="'Liberation Sans',sans-serif" textLength="38.500">Казань</text>
<text font-size="9" font-weight="bold" fill="#444" transform="translate(5,200) rotate(-42)">Волга»</text>
<text font-size="9" font-weight="bold" fill="#444" transform="translate(403,114) rotate(-98)">«Волга»</text>
</g>
<path d="M240 106.500C233 97 224 93 224 85a16 16 0 0 1 32 0c0 8-9 12-16 21.500zM240 79a6 6 0 1 0 0 12 6 6 0 0 0 0-12z" fill="#000" fill-rule="evenodd" opacity=".4" filter="url(#pinsh)" transform="translate(1.500,2.500)"/>
<path d="M240 106.500C233 97 224 93 224 85a16 16 0 0 1 32 0c0 8-9 12-16 21.500zM240 79a6 6 0 1 0 0 12 6 6 0 0 0 0-12z" fill="#5baee1" fill-rule="evenodd"/>
</svg>
<!--/MAP-->
<!-- comments -->
<div class="abs" style="left:839px;top:355px;width:467px;height:284px;overflow:hidden;">
  <div class="abs" style="left:0;top:-20px;width:280px;height:302px;border:1px solid #ddd;border-radius:4px;box-shadow:0 1px 2px rgba(0,0,0,.12);background:#fff;"></div>
  <!-- doc thumb -->
  <svg class="abs" style="left:2px;top:0;" width="136" height="76" viewBox="0 0 136 76">
    <defs><filter id="db" x="-5%" y="-5%" width="110%" height="110%"><feGaussianBlur stdDeviation="0.35"/></filter></defs>
    <rect width="136" height="76" fill="#fefefe"/>
    <rect x="135" y="0" width="1" height="76" fill="#c4c4c4"/>
    <path d="M1.500 0V76" stroke="#c9d3dc" stroke-width="1" stroke-dasharray="3 2"/>
    <g filter="url(#db)">
    <g fill="#8ccbe6" fill-opacity=".55" stroke="#6db8da" stroke-width="0.8" stroke-opacity=".8">
      <circle cx="38.800" cy="5.500" r="10.500"/>
      <circle cx="33.900" cy="41.500" r="13.200"/>
    </g>
    <g fill="#b5dcee" fill-opacity=".35" stroke="#7cc0de" stroke-width="0.9" stroke-opacity=".8">
      <circle cx="95.800" cy="41.500" r="13.300"/>
      <circle cx="95.800" cy="41.500" r="9"/>
    </g>
    <circle cx="92.500" cy="4.500" r="12" fill="none" stroke="#cfe6f1" stroke-width="0.9"/>
    <g fill="none" stroke="#777" stroke-width="0.6" opacity=".6">
      <path d="M11 2.800h52 M69 2.800h56 M28 4.300h8 M46 4.300h9 M85 4.300h8 M104 4.300h9"/>
      <path d="M21 8.500h36 M76 8.500h38"/>
      <path d="M28 24.500h20 M84 24h21"/>
      <path d="M19 27.600h39 M72 26.800h48"/>
      <path d="M27 30.200h22"/>
      <path d="M11 32.300h53 M69 32.300h57"/>
      <path d="M16 33.800h44 M72 33.600h50"/>
      <path d="M25 36h26 M72 35.800h48"/>
      <path d="M11 44h52 M69 44h56 M27 45.500h9 M47 45.500h8 M86 45.500h7 M104 45.500h9"/>
      <path d="M20 50h36 M77 50h38"/>
    </g>
    <g fill="none" stroke="#2f3f9c" stroke-width="0.8" opacity=".8">
<path d="M13 1.2q1.75 -1.6 3.5 0q1.75 1.6 3.5 0q1.75 -1.6 3.5 0q1.75 1.6 3.5 0q1.75 -1.6 3.5 0q1.75 1.6 3.5 0q1.75 -1.6 3.5 0q1.75 1.6 3.5 0q1.75 -1.6 3.5 0q1.75 1.6 3.5 0q1.75 -1.6 3.5 0q1.75 1.6 3.5 0 M95 2q1.8 -2 3.6 0q1.8 2 3.6 0q1.8 -2 3.6 0q1.8 2 3.6 0q1.8 -2 3.6 0q1.8 2 3.6 0q1.8 -2 3.6 0q1.8 2 3.6 0q1.8 -2 3.6 0"/>
<path d="M24 8.5q1.5 -2 3 0q1.5 2 3 0 M38 8.5q1.5 -2.5 3 0q1.5 2.5 3 0q1.5 -2.5 3 0 M50 8.5q1.5 -2 3 0q1.5 2 3 0 M78 8.5q1.5 -2.5 3 0q1.5 2.5 3 0 M90 8.5q1.5 -2.5 3 0q1.5 2.5 3 0 M104 8.5q1.5 -2.5 3 0q1.5 2.5 3 0" stroke-width="0.7"/>
<path d="M72 31q1.8 -2.6 3.6 0q1.8 2.6 3.6 0q1.8 -2.6 3.6 0q1.8 2.6 3.6 0q1.8 -2.6 3.6 0q1.8 2.6 3.6 0q1.8 -2.6 3.6 0q1.8 2.6 3.6 0q1.8 -2.6 3.6 0q1.8 2.6 3.6 0q1.8 -2.6 3.6 0q1.8 2.6 3.6 0q1.8 -2.6 3.6 0q1.8 2.6 3.6 0" stroke-width="1"/>
<path d="M21 38v10 M25 37v11 M28.500 37.500v10 M34 33v16" stroke-width="0.800" opacity=".7"/>
<path d="M40 44q1.6 -4 3.2 0q1.6 4 3.2 0q1.6 -4 3.2 0q1.6 4 3.2 0q1.6 -4 3.2 0q1.6 4 3.2 0" stroke-width="0.800"/>
<path d="M74 48.500q10-3 22-7 M100 43q1.6 -4 3.2 0q1.6 4 3.2 0q1.6 -4 3.2 0q1.6 4 3.2 0q1.6 -4 3.2 0q1.6 4 3.2 0q1.6 -4 3.2 0q1.6 4 3.2 0" stroke-width="0.800"/>
<path d="M24 50q1.5 -2 3 0q1.5 2 3 0 M38 50q1.5 -2 3 0q1.5 2 3 0 M52 50q1.5 -2 3 0 M80 50q1.5 -2.5 3 0q1.5 2.5 3 0 M93 50q1.5 -2.5 3 0q1.5 2.5 3 0 M108 50q1.5 -2.5 3 0q1.5 2.5 3 0" stroke-width="0.7"/>
</g>
    <g fill="none" stroke="#5a5a5a" stroke-width="0.800" opacity=".8">
      <path d="M25 62.400h84 M22 65.700h88"/>
      <path d="M11 68h113" stroke-width="0.500"/>
      <path d="M52 69.500h30" stroke-width="0.500"/>
    </g>
    </g>
    <text x="68.500" y="58.500" text-anchor="middle" font-family="'Liberation Serif',serif" font-size="5.300" fill="#3c3c3c" textLength="60" lengthAdjust="spacingAndGlyphs">ПАСПОРТ БЕЗОПАСНОСТИ</text>
  </svg>
  <!-- pdf thumb -->
  <div class="abs" style="left:143px;top:0;width:136px;height:76px;background:#f0f0f0;"></div>
  <svg class="abs" style="left:171px;top:3px;" width="25" height="24" viewBox="0 0 25 24"><path d="M6 15.500a5.200 5.200 0 0 1-.6-10.300A6.500 6.500 0 0 1 17.800 4.200a5.600 5.600 0 0 1 1.400 11.200H16v-5H9v5.100z" fill="#337ab7"/><path d="M10.300 11.500h4.400v6h3.400l-5.600 6-5.600-6h3.400z" fill="#337ab7"/></svg>
  <div class="abs" style="left:201.500px;top:-3.500px;font-size:24px;line-height:30px;color:#337ab7;">PDF</div>
  <svg class="abs" style="left:313px;top:41px;" width="16" height="12" viewBox="0 0 16 12"><path d="M9.500 0 15.500 5 9.500 10V7C5 7 2.500 8.500.5 11.500 1 7 4 3.500 9.500 3z" fill="#707070"/></svg>
  <div class="abs" style="left:12px;top:81px;width:256px;font-size:14px;line-height:20px;color:#333;">
    <p style="margin:0 0 10px;">Заданию назначили организацию: "Бригада 10".</p>
    <p style="margin:0 0 10px;">Заданию назначили исполнителя: "Куликов Михаил".</p>
    <p style="margin:0 0 10px;">При создании задания к нему были прикреплены файлы.</p>
    <p style="margin:0;">Было установлено главное фото задания.</p>
  </div>
  <div class="abs" style="left:224.500px;top:258px;font-size:15.500px;line-height:20px;color:#999;white-space:nowrap;">✓</div><div class="abs" style="left:239.500px;top:259.500px;font-size:12px;line-height:16px;color:#999;white-space:nowrap;">10:55</div>
</div>
<!-- paperclip -->
<svg class="abs" style="left:834px;top:640px;" width="26" height="24" viewBox="0 0 26 24"><path transform="translate(12.700,13.300) rotate(-38) translate(-8.800,-3.450)" fill="none" stroke="#2e76bf" stroke-width="1.100" d="M4.500 6.900H13.200A3.450 3.450 0 0 0 13.200 0H3.300A2.300 2.300 0 0 0 3.300 4.600H11.600A1.150 1.150 0 0 0 11.600 2.300H5.500"/></svg>
<!-- textarea -->
<div class="abs" style="left:839px;top:669px;width:467px;height:114px;border:1px solid #ccc;border-radius:4px;box-shadow:inset 0 1px 1px rgba(0,0,0,.075);padding:6px 12px;font-size:14px;line-height:20px;color:#999;">Для отправки комментария нажмите Enter.
  <svg class="abs" style="right:0;bottom:0;" width="16" height="16" viewBox="0 0 16 16"><path d="M2 14 14 2 M6 14 14 6 M10 14 14 10 M13 14 14 13" stroke="#777" stroke-width="1.100" fill="none"/></svg>
</div>
<!-- upload icons -->
<svg class="abs" style="left:566px;top:659px;" width="44" height="62" viewBox="0 0 44 62" fill="#337ab7">
  <path d="M5.200 4.200 6.200 2.200Q6.800 1 8 1h3Q12.200 1 12.800 2.200L13.800 4.200h3a1.700 1.700 0 0 1 1.700 1.700v9.100a1.700 1.700 0 0 1-1.700 1.700h-14.700a1.700 1.700 0 0 1-1.700-1.700v-9.100a1.700 1.700 0 0 1 1.700-1.700z M9.400 7.100a3.300 3.300 0 1 0 0 6.600 3.300 3.300 0 0 0 0-6.600z M9.400 8.900a1.500 1.500 0 1 1 0 3 1.500 1.500 0 0 1 0-3z M14.300 5.900h1.400v1h-1.400z" fill-rule="evenodd"/>
  <path d="M25 0h7.600v6.300h6.100v11.500h-13.700z M33.900 1.600 37.600 5.300h-3.700z"/>
  <path d="M0.400 24.100h13.400v4.300l4.600-3v9.300l-4.600-3v4.100h-13.400z"/>
  <path d="M23.900 34.700v-4.300a8.500 8.500 0 0 1 17 0v4.300" fill="none" stroke="#337ab7" stroke-width="1.700"/>
  <rect x="26.400" y="30.900" width="3.200" height="7.700"/><rect x="35.400" y="30.900" width="3.200" height="7.700"/>
  <path d="M12.300 44.400h-7a3.600 3.600 0 0 0-3.600 3.600v6.800a3.600 3.600 0 0 0 3.600 3.600h6.600a3.600 3.600 0 0 0 3.600-3.600v-4.300" fill="none" stroke="#337ab7" stroke-width="2.800"/>
  <path d="M7.200 54.800 8.300 52 14 46.300l2 2-5.800 5.700z M15.800 44.600l1.700-1.600 2 2-1.700 1.600z"/>
  <g>
    <path d="M23.300 41.900h7.600v7.900h-7.600z M25 43.600v4.500h4.200v-4.500z M33.100 41.900h8.700v7.600h-8.700z M34.900 43.600v4.200h5.100v-4.200z M23.300 51.900h7.600v7.900h-7.600z M25 53.600v4.500h4.200v-4.500z" fill-rule="evenodd"/>
    <rect x="26.300" y="45" width="1.700" height="1.700"/><rect x="36.600" y="45" width="1.700" height="1.700"/><rect x="26.300" y="55" width="1.700" height="1.700"/>
    <path d="M30.900 45.900h1.800v1.700h-1.800z M31.500 51.400h4.300v2.200h-1.700v2h2.600v-2.200h1.700v2.200h-1.700v1.700h-4.300v-1.700h1v-2.400h-1.900z M37.400 49.500h4.400v4.100h-4.400z M39.800 54.900h1.900v1.700h-1.900z M32.200 58.200h1.700v1.600h-1.700z M37.200 58h4.600v1.800h-4.600z"/>
  </g>
</svg>

<div id="frame"></div>
</body>
</html>
